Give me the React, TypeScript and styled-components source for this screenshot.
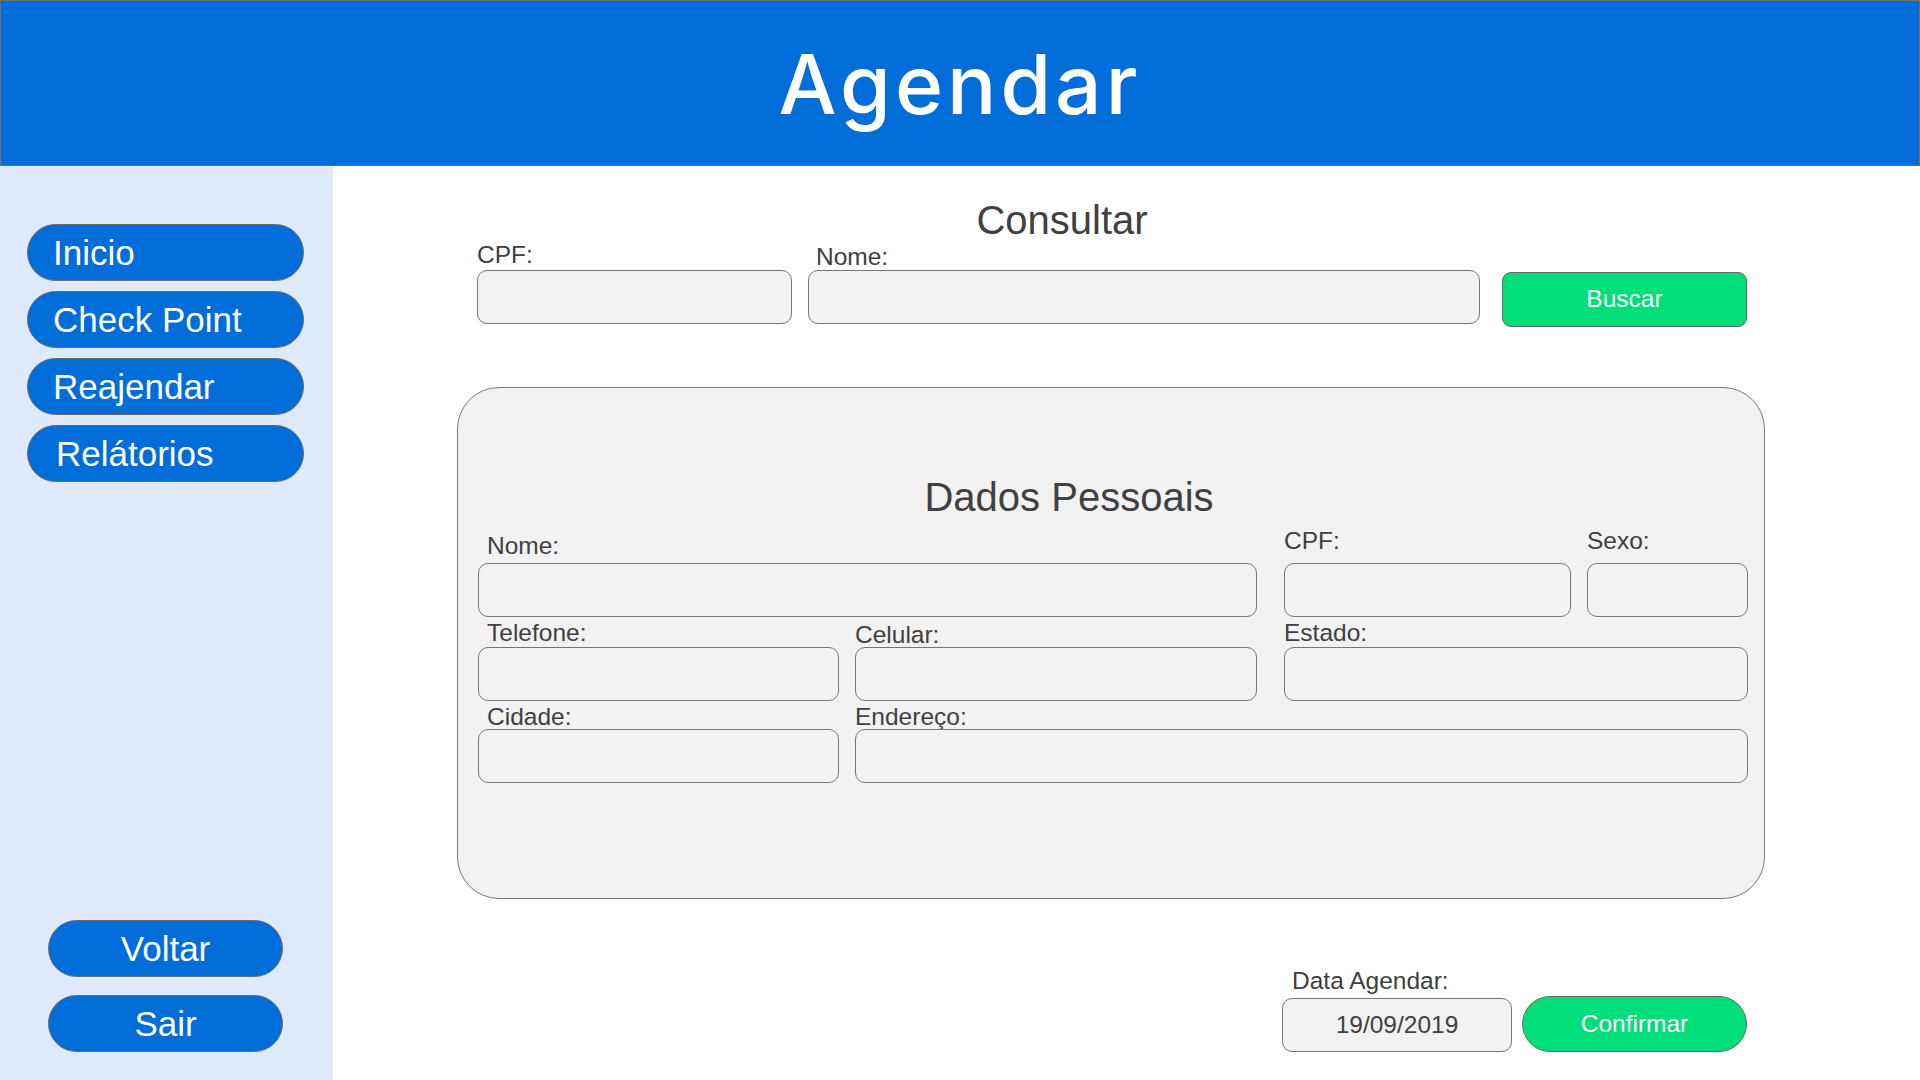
import React from "react";
import styled, { createGlobalStyle } from "styled-components";

const GlobalStyle = createGlobalStyle`
  html, body { margin: 0; padding: 0; }
  body {
    font-family: "Liberation Sans", Arial, sans-serif;
    background: #ffffff;
    color: #404040;
  }
  * { box-sizing: border-box; }
`;

const Page = styled.div`
  display: grid;
  grid-template-columns: 333px 1fr;
  grid-template-rows: 166px 1fr;
  width: 1920px;
  height: 1080px;
  overflow: hidden;
`;

const Header = styled.header`
  grid-column: 1 / 3;
  display: flex;
  align-items: center;
  justify-content: center;
  background: #006dd9;
  border: 1px solid #6f6f6f;
`;

const HeaderTitle = styled.h1`
  margin: 0;
  padding-top: 3px;
  font-family: Inter, "Open Sans", sans-serif;
  font-weight: 500;
  font-size: 82px;
  line-height: 1;
  letter-spacing: 4px;
  color: #ffffff;
`;

const Sidebar = styled.aside`
  display: flex;
  flex-direction: column;
  justify-content: space-between;
  background: #deeafb;
  padding: 58px 0 28px 27px;
`;

const NavList = styled.nav`
  display: flex;
  flex-direction: column;
  gap: 10px;
`;

const BottomNav = styled.div`
  display: flex;
  flex-direction: column;
  gap: 18px;
  padding-left: 21px;
`;

const PillButton = styled.button<{ $width: number; $align?: "left" | "center"; $indent?: number }>`
  width: ${(p) => p.$width}px;
  height: 57px;
  display: flex;
  align-items: center;
  justify-content: ${(p) => (p.$align === "center" ? "center" : "flex-start")};
  padding: 0 0 0 ${(p) => (p.$align === "center" ? 0 : p.$indent ?? 25)}px;
  background: #006dd9;
  color: #ffffff;
  border: 1px solid #6a6a6a;
  border-radius: 29px;
  font-family: "Liberation Sans", Arial, sans-serif;
  font-size: 35px;
  line-height: 1;
  cursor: pointer;
`;

const Main = styled.main`
  padding: 33px 0 0 124px;
`;

const Content = styled.div`
  width: 1308px;
  display: flex;
  flex-direction: column;
`;

const SectionTitle = styled.h2<{ $shift: number }>`
  margin: 0;
  text-align: center;
  padding-right: ${(p) => p.$shift * 2}px;
  font-family: "Liberation Sans", Arial, sans-serif;
  font-weight: 400;
  font-size: 40px;
  line-height: 43px;
  color: #404040;
`;

const SearchRow = styled.div`
  display: flex;
  align-items: flex-end;
  gap: 16px;
  padding: 0 18px 0 20px;
`;

const Field = styled.div<{ $width?: number; $col?: string }>`
  display: flex;
  flex-direction: column;
  ${(p) => (p.$width ? `width: ${p.$width}px;` : "")}
  ${(p) => (p.$col ? `grid-column: ${p.$col};` : "")}
`;

const Label = styled.label<{ $gap?: number; $indent?: number }>`
  display: block;
  font-size: 24.5px;
  line-height: 26px;
  color: #404040;
  margin-bottom: ${(p) => p.$gap ?? 2}px;
  padding-left: ${(p) => p.$indent ?? 0}px;
  white-space: nowrap;
`;

const Input = styled.div`
  height: 54px;
  background: #f2f2f2;
  border: 1px solid #777777;
  border-radius: 10px;
`;

const GreenButton = styled.button<{ $width: number; $height: number; $round?: boolean; $drop?: number }>`
  width: ${(p) => p.$width}px;
  height: ${(p) => p.$height}px;
  margin-bottom: ${(p) => -(p.$drop ?? 0)}px;
  background: #00de7a;
  color: #ffffff;
  border: 1px solid #6a6a6a;
  border-radius: ${(p) => (p.$round ? p.$height / 2 : 9)}px;
  font-family: "Liberation Sans", Arial, sans-serif;
  font-size: 24.5px;
  line-height: 1;
  cursor: pointer;
`;

const BuscarSlot = styled.div`
  margin-left: 6px;
`;

const Panel = styled.section`
  margin-top: 63px;
  height: 512px;
  background: #f2f2f2;
  border: 1px solid #7a7a7a;
  border-radius: 42px;
  padding: 88px 18px 0 20px;
`;

const FormGrid = styled.div`
  margin-top: 9px;
  display: grid;
  grid-template-columns: 361px 16px 402px 27px 287px 16px 161px;
  row-gap: 3px;
  align-items: end;
`;

const BottomRow = styled.div`
  margin-top: 69px;
  display: flex;
  justify-content: flex-end;
  align-items: flex-end;
  gap: 10px;
  padding-right: 18px;
`;

const DateInput = styled.div`
  height: 54px;
  display: flex;
  align-items: center;
  justify-content: center;
  background: #f2f2f2;
  border: 1px solid #777777;
  border-radius: 10px;
  font-size: 24.5px;
  color: #404040;
`;

export default function App() {
  return (
    <>
      <GlobalStyle />
      <Page>
        <Header>
          <HeaderTitle>Agendar</HeaderTitle>
        </Header>
        <Sidebar>
          <NavList>
            <PillButton $width={277}>Inicio</PillButton>
            <PillButton $width={277}>Check Point</PillButton>
            <PillButton $width={277}>Reajendar</PillButton>
            <PillButton $width={277} $indent={28}>Relátorios</PillButton>
          </NavList>
          <BottomNav>
            <PillButton $width={235} $align="center">Voltar</PillButton>
            <PillButton $width={235} $align="center">Sair</PillButton>
          </BottomNav>
        </Sidebar>
        <Main>
          <Content>
            <SectionTitle $shift={49}>Consultar</SectionTitle>
            <SearchRow>
              <Field $width={315}>
                <Label $gap={2}>CPF:</Label>
                <Input />
              </Field>
              <Field $width={672}>
                <Label $gap={0} $indent={8}>Nome:</Label>
                <Input />
              </Field>
              <BuscarSlot>
                <GreenButton $width={245} $height={55} $drop={3}>Buscar</GreenButton>
              </BuscarSlot>
            </SearchRow>

            <Panel>
              <SectionTitle $shift={43}>Dados Pessoais</SectionTitle>
              <FormGrid>
                <Field $col="1 / 4">
                  <Label $gap={4} $indent={9}>Nome:</Label>
                  <Input />
                </Field>
                <Field $col="5 / 6">
                  <Label $gap={9}>CPF:</Label>
                  <Input />
                </Field>
                <Field $col="7 / 8">
                  <Label $gap={9}>Sexo:</Label>
                  <Input />
                </Field>

                <Field $col="1 / 2">
                  <Label $gap={1} $indent={9}>Telefone:</Label>
                  <Input />
                </Field>
                <Field $col="3 / 4">
                  <Label $gap={-1}>Celular:</Label>
                  <Input />
                </Field>
                <Field $col="5 / 8">
                  <Label $gap={1}>Estado:</Label>
                  <Input />
                </Field>

                <Field $col="1 / 2">
                  <Label $gap={-1} $indent={9}>Cidade:</Label>
                  <Input />
                </Field>
                <Field $col="3 / 8">
                  <Label $gap={-1}>Endereço:</Label>
                  <Input />
                </Field>
              </FormGrid>
            </Panel>

            <BottomRow>
              <Field $width={230}>
                <Label $gap={4} $indent={10}>Data Agendar:</Label>
                <DateInput>19/09/2019</DateInput>
              </Field>
              <GreenButton $width={225} $height={56} $round>Confirmar</GreenButton>
            </BottomRow>
          </Content>
        </Main>
      </Page>
    </>
  );
}
